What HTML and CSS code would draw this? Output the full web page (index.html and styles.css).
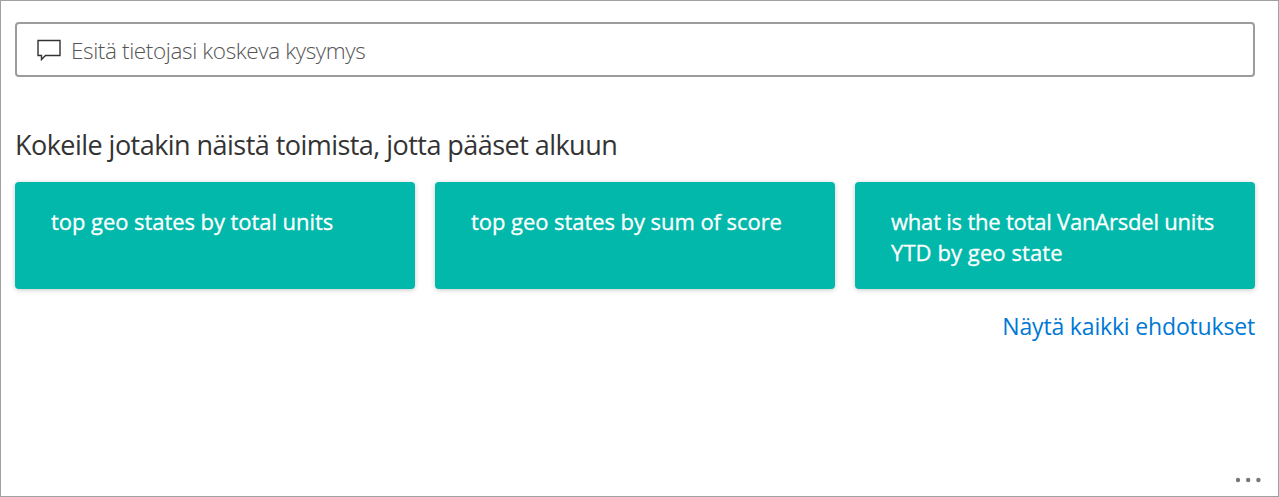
FILE: index.html
```html
<!DOCTYPE html>
<html lang="fi">
<head>
<meta charset="utf-8">
<title>Q&amp;A</title>
<link rel="stylesheet" href="styles.css">
</head>
<body>
<main class="panel">
  <div class="ask">
    <svg class="ask-icon" viewBox="0 0 26 24" width="26" height="24"><path d="M2 2.5H24V17.5H9.5L5.5 21.5V17.5H2Z"/></svg>
    <span class="ask-text">Esitä tietojasi koskeva kysymys</span>
  </div>
  <h1 class="heading">Kokeile jotakin näistä toimista, jotta pääset alkuun</h1>
  <div class="cards">
    <div class="card">top geo states by total units</div>
    <div class="card">top geo states by sum of score</div>
    <div class="card"><span class="line-wide">what is the total VanArsdel units</span><br><span class="line-short">YTD by geo state</span></div>
  </div>
  <a class="all">Näytä kaikki ehdotukset</a>
  <svg class="more" viewBox="0 0 26 6" width="26" height="6"><circle cx="3" cy="3" r="2.2"/><circle cx="13.2" cy="3" r="2.2"/><circle cx="23.4" cy="3" r="2.2"/></svg>
</main>
</body>
</html>
```
FILE: styles.css
```css
* { box-sizing: border-box; }
body { margin: 0; font-family: "Open Sans", "Noto Sans", sans-serif; }
.panel { height: 497px; border: 1px solid #a0a0a0; padding: 21px 23px 0 14px; display: flex; flex-direction: column; background: #fff; }
.ask { height: 55px; border: 2px solid #9c9c9c; border-radius: 4px; display: flex; align-items: center; padding-left: 19px; gap: 9px; }
.ask-icon { fill: none; stroke: #333; stroke-width: 1.4; }
.ask-text { padding-top: 2px; font-size: 22.5px; font-weight: 300; color: #555; letter-spacing: -0.38px; white-space: nowrap; }
.heading { margin: 48px 0 0; font-size: 27px; line-height: 40px; font-weight: 400; color: #333; letter-spacing: -0.54px; white-space: nowrap; }
.cards { display: grid; grid-template-columns: repeat(3, 400px); gap: 20px; margin-top: 17px; }
.card { height: 107px; border-radius: 4px; background: #01b8aa; color: #fff; font-size: 22px; line-height: 31px; letter-spacing: -0.06px; -webkit-text-stroke: 0.3px #fff; padding: 24px 0 0 36px; white-space: nowrap; box-shadow: 0 1px 5px rgba(0,0,0,.22); }
.line-wide { letter-spacing: -0.21px; }
.line-short { letter-spacing: 0.08px; }
.all { align-self: flex-end; margin-top: 20px; font-size: 23px; line-height: 34px; color: #0078d4; letter-spacing: -0.17px; white-space: nowrap; }
.more { align-self: flex-end; margin-top: auto; margin-bottom: 13px; margin-right: -6px; fill: #777; }
```
